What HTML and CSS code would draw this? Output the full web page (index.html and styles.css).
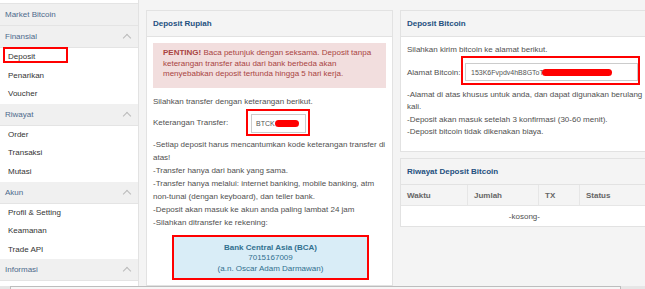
FILE: index.html
```html
<!DOCTYPE html>
<html>
<head>
<meta charset="utf-8">
<link rel="stylesheet" href="styles.css">
</head>
<body>
<div class="page">
	<aside class="sidebar">
		<div class="side-top"></div>
		<div class="side-head">Market Bitcoin</div>
		<div class="side-head">Finansial <span class="chev"></span></div>
		<ul class="side-list">
			<li><span class="mark">Deposit</span></li>
			<li>Penarikan</li>
			<li>Voucher</li>
		</ul>
		<div class="side-head">Riwayat <span class="chev"></span></div>
		<ul class="side-list">
			<li>Order</li>
			<li>Transaksi</li>
			<li>Mutasi</li>
		</ul>
		<div class="side-head">Akun <span class="chev"></span></div>
		<ul class="side-list">
			<li>Profil &amp; Setting</li>
			<li>Keamanan</li>
			<li>Trade API</li>
		</ul>
		<div class="side-head">Informasi <span class="chev"></span></div>
	</aside>

	<main class="content">
		<section class="col-left">
			<div class="panel panel-rupiah">
				<div class="panel-head">Deposit Rupiah</div>
				<div class="panel-body">
					<div class="alert"><b>PENTING!</b> Baca petunjuk dengan seksama. Deposit tanpa<br>keterangan transfer atau dari bank berbeda akan<br>menyebabkan deposit tertunda hingga 5 hari kerja.</div>
					<p class="line intro">Silahkan transfer dengan keterangan berikut.</p>
					<div class="field-row">
						<label class="field-label">Keterangan Transfer:</label>
						<div class="redbox code-box">
							<div class="field-input">BTCK<span class="blot short"></span></div>
						</div>
					</div>
					<div class="notes">
						-Setiap deposit harus mencantumkan kode keterangan transfer di<br>
						atas!<br>
						-Transfer hanya dari bank yang sama.<br>
						-Transfer hanya melalui: internet banking, mobile banking, atm<br>
						non-tunai (dengan keyboard), dan teller bank.<br>
						-Deposit akan masuk ke akun anda paling lambat 24 jam<br>
						-Silahkan ditransfer ke rekening:
					</div>
					<div class="bank">
						<b>Bank Central Asia (BCA)</b><br>
						7015167009<br>
						(a.n. Oscar Adam Darmawan)
					</div>
				</div>
			</div>
		</section>

		<section class="col-right">
			<div class="panel panel-btc">
				<div class="panel-head">Deposit Bitcoin</div>
				<div class="panel-body">
					<p class="line">Silahkan kirim bitcoin ke alamat berikut.</p>
					<div class="field-row btc-row">
						<label class="field-label btc-label">Alamat Bitcoin:</label>
						<div class="redbox addr-box">
							<div class="field-input addr">153K6Fvpdv4hB8GToT<span class="blot long"></span></div>
						</div>
					</div>
					<div class="notes btc-notes">
						-Alamat di atas khusus untuk anda, dan dapat digunakan berulang<br>
						kali.<br>
						-Deposit akan masuk setelah 3 konfirmasi (30-60 menit).<br>
						-Deposit bitcoin tidak dikenakan biaya.
					</div>
				</div>
			</div>

			<div class="panel panel-history">
				<div class="panel-head">Riwayat Deposit Bitcoin</div>
				<table class="history">
					<thead>
						<tr>
							<th class="c-waktu">Waktu</th>
							<th class="c-jumlah">Jumlah</th>
							<th class="c-tx">TX</th>
							<th>Status</th>
						</tr>
					</thead>
					<tbody>
						<tr><td colspan="4">-kosong-</td></tr>
					</tbody>
				</table>
			</div>
		</section>
	</main>

	<div class="hscroll"><div class="thumb"></div></div>
</div>
</body>
</html>
```

FILE: styles.css
```css
body {
	margin: 0;
	font-family: "Liberation Sans", Arial, sans-serif;
	font-size: 8px;
	color: #505050;
	background: #f4f4f4;
}
.page {
	position: relative;
	display: flex;
	width: 645px;
	height: 289px;
	overflow: hidden;
}

/* sidebar */
.sidebar {
	width: 138px;
	flex: none;
	background: #fff;
	border-right: 1px solid #e2e2e2;
}
.side-top {
	height: 3px;
	border-bottom: 1px solid #e4e4e4;
}
.side-head {
	height: 21px;
	line-height: 21px;
	padding-left: 5px;
	background: #f0f0f0;
	color: #4d6a8c;
	border-bottom: 1px solid #e4e4e4;
	position: relative;
}
.chev {
	position: absolute;
	right: 8px;
	top: 9px;
	width: 5px;
	height: 5px;
	border-left: 1px solid #bbb;
	border-top: 1px solid #bbb;
	transform: rotate(45deg);
}
.side-list {
	list-style: none;
	margin: 0;
	padding: 0;
}
.side-list li {
	height: 18.6px;
	line-height: 18.6px;
	padding-left: 8px;
	color: #333;
}
.mark {
	position: relative;
}
.mark::after {
	content: "";
	position: absolute;
	left: -5px;
	top: -5px;
	width: 61px;
	height: 12px;
	border: 2px solid #f00;
}

/* content */
.content {
	flex: 1;
	display: flex;
	gap: 7px;
	padding: 10px 0 0 7px;
}
.col-left {
	width: 247px;
	flex: none;
}
.col-right {
	flex: 1;
	margin-right: -3px;
	display: flex;
	flex-direction: column;
	gap: 6px;
}
.panel {
	background: #fff;
	border: 1px solid #e2e2e2;
	box-sizing: border-box;
}
.panel-rupiah {
	height: 276px;
}
.panel-btc {
	height: 142px;
}
.panel-head {
	height: 25px;
	line-height: 25px;
	padding-left: 6px;
	background: #f4f4f4;
	border-bottom: 1px solid #e2e2e2;
	color: #24507f;
	font-weight: bold;
}
.panel-body {
	padding: 6px;
}
.alert {
	background: #f2dede;
	color: #a94442;
	padding: 5px 10px 8px;
	line-height: 10.6px;
}
.line {
	margin: 0;
	line-height: 13px;
}
.intro {
	margin-top: 7px;
}
.field-row {
	display: flex;
	align-items: center;
	margin-top: 1px;
}
.field-label {
	width: 93px;
	flex: none;
	margin-top: 1px;
}
.redbox {
	border: 2px solid #f00;
	box-sizing: border-box;
}
.code-box {
	width: 64px;
	height: 27px;
	padding: 3px 2px 1px 3px;
}
.field-input {
	height: 100%;
	box-sizing: border-box;
	border: 1px solid #ccc;
	padding-left: 4px;
	display: flex;
	align-items: center;
	font-size: 7px;
	color: #555;
	background: #fff;
}
.blot {
	display: inline-block;
	background: #f00;
	border-radius: 4px;
	height: 7px;
}
.blot.short {
	width: 24px;
}
.blot.long {
	width: 70px;
	margin-left: -2px;
}
.notes {
	line-height: 13px;
	margin-top: 2px;
	white-space: nowrap;
}
.bank {
	margin: 6px 0 0 19px;
	width: 197px;
	height: 45px;
	box-sizing: border-box;
	border: 2px solid #f00;
	background: #d9edf7;
	color: #31708f;
	text-align: center;
	line-height: 10.5px;
	padding-top: 6px;
}

/* bitcoin panel */
.btc-row {
	margin-top: 0;
}
.btc-label {
	width: 54px;
	margin-top: 3px;
}
.addr-box {
	width: 179px;
	height: 29px;
	padding: 5px 0 2px 2px;
}
.addr {
	padding-left: 5px;
}
.btc-notes {
	line-height: 12.4px;
	margin-top: 4px;
}

/* history */
.history {
	width: 100%;
	border-collapse: collapse;
}
.history th {
	height: 20px;
	padding: 0 0 0 6px;
	text-align: left;
	color: #666;
	background: #f4f4f4;
	border-right: 1px solid #e6e6e6;
	border-bottom: 1px solid #e6e6e6;
}
.history .c-waktu { width: 60px; }
.history .c-jumlah { width: 64px; }
.history .c-tx { width: 34px; }
.history td {
	height: 18px;
	text-align: center;
}

/* bottom scrollbar */
.hscroll {
	position: absolute;
	left: 0;
	right: 0;
	bottom: 0;
	height: 3px;
	background: #e6e6e6;
}
.hscroll .thumb {
	margin-left: 10px;
	width: 611px;
	height: 6px;
	box-sizing: border-box;
	border: 1px solid #bdbdbd;
	background: #f6f6f6;
}
```
